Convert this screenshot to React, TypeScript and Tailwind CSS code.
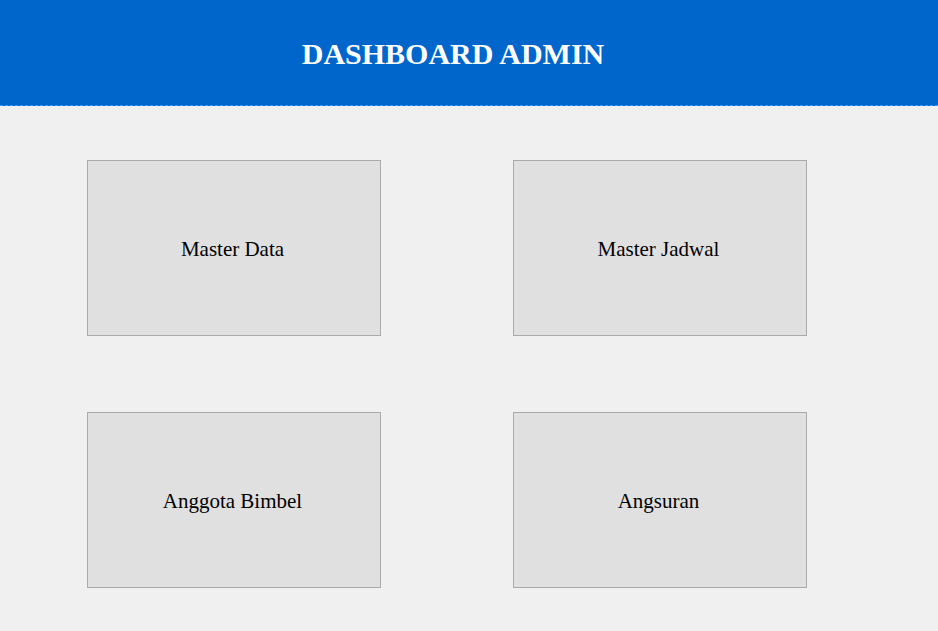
export default function App() {
  const items = ["Master Data", "Master Jadwal", "Anggota Bimbel", "Angsuran"];
  return (
    <div className="min-h-[631px] bg-[#f0f0f0]" style={{ fontFamily: '"Liberation Serif", serif' }}>
      <header className="h-[106px] bg-[#0066cc] border-b border-dashed border-[#3399ff] flex items-center justify-center pr-[32px]">
        <h1 className="text-[30px] font-bold text-white leading-none pt-[2px]">DASHBOARD ADMIN</h1>
      </header>
      <main className="pl-[87px] pt-[54px]">
        <div className="grid grid-cols-[294px_294px] gap-x-[132px] gap-y-[76px]">
          {items.map((t) => (
            <div
              key={t}
              className="h-[176px] bg-[#e0e0e0] border border-[#aaaaaa] flex items-center justify-center text-[21px] text-black"
            >
              <span className="pt-[4px] pr-[3px]">{t}</span>
            </div>
          ))}
        </div>
      </main>
    </div>
  );
}
